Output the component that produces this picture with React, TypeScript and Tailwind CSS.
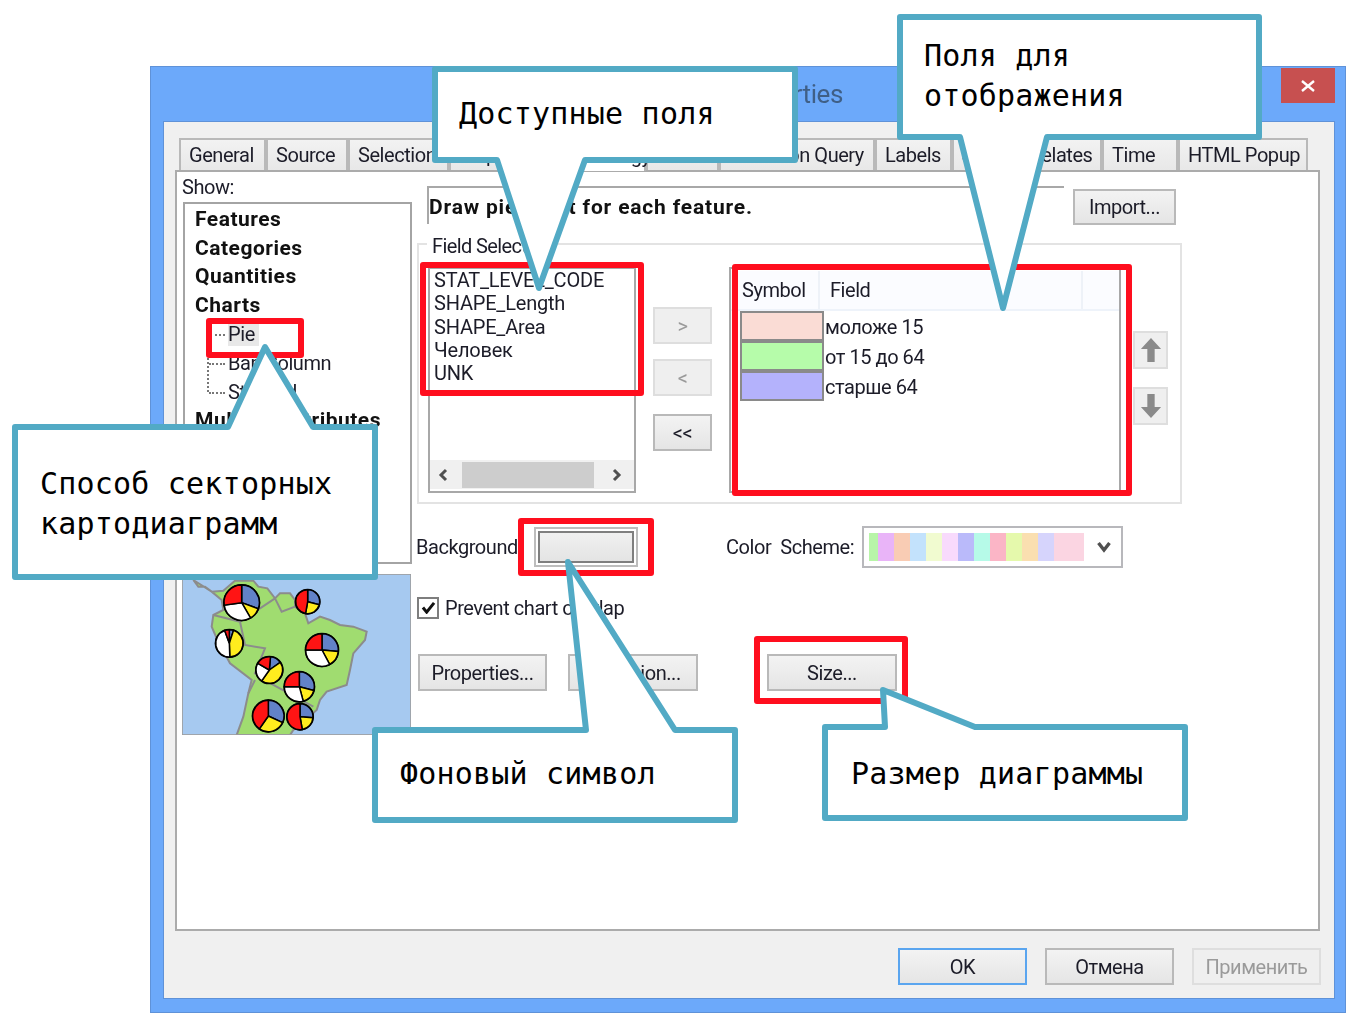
import React from "react";

const btn =
  "flex items-center justify-center border-2 border-[#b9b9b9] bg-gradient-to-b from-[#f3f3f3] to-[#e5e5e5] text-[#1c1c28]";
const btnOff =
  "flex items-center justify-center border-2 border-[#dedede] bg-[#efefef] text-[#9a9a9a]";

const tabs: [string, string][] = [
  ["General", "w-[87px]"],
  ["Source", "w-[82px]"],
  ["Selection", "w-[101px]"],
  ["Display", "w-[97px]"],
  ["Symbology", "w-[100px]"],
  ["Fields", "w-[73px]"],
  ["Definition Query", "w-[156px]"],
  ["Labels", "w-[77px]"],
  ["Joins & Relates", "w-[150px]"],
  ["Time", "w-[76px]"],
  ["HTML Popup", "w-[130px]"],
];

const swatches: [string, string][] = [
  ["w-[9px]", "bg-[#b8f5a8]"],
  ["w-[16px]", "bg-[#e9b4f8]"],
  ["w-[16px]", "bg-[#f9ccb4]"],
  ["w-[16px]", "bg-[#c3e2fc]"],
  ["w-[16px]", "bg-[#f1fbd0]"],
  ["w-[16px]", "bg-[#f8dafc]"],
  ["w-[16px]", "bg-[#babafa]"],
  ["w-[16px]", "bg-[#b6fae8]"],
  ["w-[16px]", "bg-[#fbb5c6]"],
  ["w-[16px]", "bg-[#e5f9ac]"],
  ["w-[16px]", "bg-[#fadfb0]"],
  ["w-[16px]", "bg-[#d6d4fc]"],
  ["w-[30px]", "bg-[#fbd5e2]"],
];

const R = "#ff1414";
const B = "#6282c8";
const Y = "#ffec1e";
const W = "#ffffff";

type Pie = { cx: number; cy: number; r: number; s: [string, number, number][] };
const pies: Pie[] = [
  { cx: 185, cy: 98, r: 53, s: [[B, 0, 110], [Y, 110, 150], [W, 150, 262], [R, 262, 360]] },
  { cx: 383, cy: 95, r: 36, s: [[B, 0, 105], [Y, 105, 190], [R, 190, 360]] },
  { cx: 148, cy: 220, r: 41, s: [[B, 0, 18], [Y, 18, 178], [W, 178, 340], [R, 340, 360]] },
  { cx: 426, cy: 240, r: 49, s: [[B, 0, 95], [Y, 95, 152], [W, 152, 270], [R, 270, 360]] },
  { cx: 268, cy: 300, r: 40, s: [[B, 5, 55], [Y, 55, 215], [W, 215, 300], [R, 300, 365]] },
  { cx: 358, cy: 350, r: 45, s: [[B, 0, 105], [Y, 105, 165], [W, 165, 270], [R, 270, 360]] },
  { cx: 265, cy: 438, r: 47, s: [[B, 0, 115], [Y, 115, 215], [R, 215, 360]] },
  { cx: 360, cy: 440, r: 39, s: [[B, 0, 95], [Y, 95, 170], [R, 170, 360]] },
];

function slice(cx: number, cy: number, r: number, a: number, b: number) {
  const p = (d: number) => {
    const t = ((d - 90) * Math.PI) / 180;
    return `${cx + r * Math.cos(t)} ${cy + r * Math.sin(t)}`;
  };
  return `M${cx} ${cy} L${p(a)} A${r} ${r} 0 ${b - a > 180 ? 1 : 0} 1 ${p(b)} Z`;
}

function MapPreview() {
  return (
    <svg viewBox="6 12 687 483" className="block w-[229px] h-[161px]">
      <rect x="6" y="12" width="687" height="483" fill="#a6c9f0" />
      <path
        d="M40 30 L55 50 L75 50 L95 65 L130 62 L150 45 L165 32 L220 32 L235 50 L262 55 L285 85 L300 70 L330 70 L345 90 L345 110 L375 130 L385 160 L420 140 L450 150 L480 165 L520 170 L560 185 L555 210 L520 250 L510 300 L500 345 L440 365 L420 390 L410 420 L370 455 L340 480 L330 495 L170 495 L190 440 L205 370 L215 330 L150 280 L110 205 L95 170 L100 135 L130 120 L125 90 L95 65 Z"
        fill="#a0dc70"
        stroke="#8c8c8c"
        strokeWidth="6"
      />
      <path
        d="M100 135 L180 155 L195 225 L255 235 L225 310 L280 345 L400 410 M285 85 L305 125 L345 110 M205 370 L225 330 M180 155 L240 115 L285 85"
        fill="none"
        stroke="#8c8c8c"
        strokeWidth="6"
      />
      {pies.map((p, i) => (
        <g key={i}>
          <circle cx={p.cx} cy={p.cy} r={p.r} fill="#000" stroke="#000" strokeWidth="6" />
          {p.s.map(([c, a, b], j) => (
            <path key={j} d={slice(p.cx, p.cy, p.r, a, b)} fill={c} stroke="#000" strokeWidth="4.5" />
          ))}
        </g>
      ))}
      <rect x="6" y="12" width="687" height="483" fill="none" stroke="#9e9e9e" strokeWidth="5" />
    </svg>
  );
}

function ArrowV({ up }: { up: boolean }) {
  return (
    <svg viewBox="0 0 24 26" className="w-[22px] h-[26px]">
      <path
        d={up ? "M12 0 L23 12 L16 12 L16 26 L8 26 L8 12 L1 12 Z" : "M12 26 L23 14 L16 14 L16 0 L8 0 L8 14 L1 14 Z"}
        fill="#8a8a8a"
      />
    </svg>
  );
}

function Dialog() {
  return (
    <div className="w-[1196px] h-[947px] bg-[#6ca9fa] border border-[#5f92d8] flex flex-col">
      <div className="h-[54px] flex items-start">
        <span className="w-[692px] h-[54px] text-right text-[26px] leading-[54px] tracking-[-0.4px] text-[#3f5f86]">
          Layer Properties
        </span>
        <div className="ml-auto mr-[10px] mt-[1px] w-[54px] h-[35px] bg-[#c75050] flex items-center justify-center">
          <svg viewBox="0 0 14 12" className="w-[14px] h-[12px]">
            <path d="M1 1 L13 11 M13 1 L1 11" stroke="#fff" strokeWidth="2.4" />
          </svg>
        </div>
      </div>

      <div className="ml-[12px] mr-[10px] h-[878px] bg-[#f0f0f0] border border-[#5f92d8] flex flex-col">
        <div className="pt-[16px] pl-[15px] flex h-[48px] gap-0">
          {tabs.map(([t, w]) => (
            <div
              key={t}
              className={
                t === "Symbology"
                  ? `${w} h-[33px] -mb-[1px] pl-[8px] bg-white border-2 border-b-0 border-[#b4b4b4] flex items-center whitespace-nowrap relative z-10`
                  : `${w} h-[32px] pl-[8px] bg-gradient-to-b from-[#f2f2f2] to-[#e8e8e8] border-2 border-b-0 border-[#b9b9b9] flex items-center whitespace-nowrap`
              }
            >
              {t}
            </div>
          ))}
        </div>

        <div className="ml-[11px] w-[1145px] h-[761px] bg-white border-2 border-[#ababab] flex pl-[5px]">
          {/* left column */}
          <div className="w-[230px] shrink-0 flex flex-col">
            <div className="h-[30px] leading-[31px]">Show:</div>
            <div className="h-[362px] ml-[1px] border-2 border-[#a4a4a4] pl-[10px] pt-[1px] font-bold text-[#111] text-[21px] tracking-[0.5px]">
              <div className="h-[29px] leading-[29px]">Features</div>
              <div className="h-[28px] leading-[28px]">Categories</div>
              <div className="h-[29px] leading-[29px]">Quantities</div>
              <div className="h-[29px] leading-[29px]">Charts</div>
              <div className="relative font-normal text-[#1c1c28] text-[20px] tracking-[-0.4px] pl-[33px]">
                <div className="absolute left-[12px] top-[14px] h-[58px] w-[12px] border-l-2 border-dotted border-[#777]" />
                <div className="h-[29px] leading-[29px] relative">
                  <span className="absolute -left-[13px] top-[14px] w-[10px] border-t-2 border-dotted border-[#777]" />
                  <span className="bg-[#e8e8e8] pr-[4px]">Pie</span>
                </div>
                <div className="h-[29px] leading-[29px] relative">
                  <span className="absolute -left-[19px] top-[14px] w-[16px] border-t-2 border-dotted border-[#777]" />
                  Bar/Column
                </div>
                <div className="h-[28px] leading-[28px] relative">
                  <span className="absolute -left-[19px] top-[14px] w-[16px] border-t-2 border-dotted border-[#777]" />
                  Stacked
                </div>
              </div>
              <div className="h-[29px] leading-[29px]">Multiple Attributes</div>
            </div>
            <div className="mt-[10px]">
              <MapPreview />
            </div>
          </div>

          {/* right column */}
          <div className="ml-[4px] flex flex-col">
            <div className="mt-[14px] flex items-start">
              <div className="ml-[11px] w-[637px] h-[38px] border-t-2 border-l-2 border-[#a8a8a8] pt-[4px] whitespace-nowrap font-bold text-[#111] text-[21px] tracking-[0.82px]">
                Draw pie chart for each feature.
              </div>
              <div className={`${btn} ml-[9px] mt-[3px] w-[103px] h-[36px]`}>Import...</div>
            </div>

            <div className="mt-[18px] ml-[1px] w-[765px] h-[261px] border-2 border-[#e3e3e3] relative flex pl-[9px] pt-[22px]">
              <span className="absolute left-[8px] -top-[12px] px-[5px] h-[26px] leading-[26px] bg-white tracking-[-0.6px]">
                Field Selection
              </span>
              <div className="w-[208px] h-[226px] border-2 border-[#a8a8a8] flex flex-col">
                <div className="flex-1 pl-[4px] leading-[23.3px] tracking-[-0.2px]">
                  <div>STAT_LEVEL_CODE</div>
                  <div>SHAPE_Length</div>
                  <div>SHAPE_Area</div>
                  <div>Человек</div>
                  <div>UNK</div>
                </div>
                <div className="h-[29px] mb-[2px] flex items-center px-[8px] bg-[#f0f0f0]">
                  <svg viewBox="0 0 10 14" className="w-[10px] h-[14px]">
                    <path d="M8 2 L3 7 L8 12" fill="none" stroke="#505050" strokeWidth="3" />
                  </svg>
                  <div className="ml-[14px] w-[132px] h-[26px] bg-[#cdcdcd]" />
                  <svg viewBox="0 0 10 14" className="ml-[18px] w-[10px] h-[14px]">
                    <path d="M2 2 L7 7 L2 12" fill="none" stroke="#505050" strokeWidth="3" />
                  </svg>
                </div>
              </div>

              <div className="ml-[17px] w-[59px] flex flex-col pt-[40px]">
                <div className={`${btnOff} h-[37px]`}>&gt;</div>
                <div className={`${btnOff} h-[37px] mt-[15px]`}>&lt;</div>
                <div className={`${btn} h-[37px] mt-[18px]`}>&lt;&lt;</div>
              </div>

              <div className="ml-[17px] w-[392px] h-[226px] border-2 border-[#a8a8a8] pl-[9px] bg-white flex flex-col">
                <div className="h-[40px] -ml-[9px] mt-[2px] flex bg-[#fbfcff] border-b-2 border-[#eef3fa] leading-[38px]">
                  <div className="w-[89px] pl-[11px] border-r-2 border-[#eef2f8]">Symbol</div>
                  <div className="w-[263px] pl-[10px] border-r-2 border-[#eef2f8]">Field</div>
                </div>
                {([
                  ["bg-[#fadcd5]", "моложе 15"],
                  ["bg-[#b6fcaa]", "от 15 до 64"],
                  ["bg-[#b4b2fc]", "старше 64"],
                ] as [string, string][]).map(([c, t]) => (
                  <div key={t} className="h-[30px] flex items-center first:mt-[1px]">
                    <div className={`${c} w-[84px] h-[30px] border-2 border-[#8a8a8a]`} />
                    <span className="ml-[1px] mt-[1px]">{t}</span>
                  </div>
                ))}
              </div>

              <div className="ml-[12px] w-[35px] flex flex-col pt-[64px]">
                <div className={`${btnOff} h-[38px]`}>
                  <ArrowV up />
                </div>
                <div className={`${btnOff} h-[38px] mt-[18px]`}>
                  <ArrowV up={false} />
                </div>
              </div>
            </div>

            <div className="mt-[22px] h-[42px] flex items-center">
              <span className="w-[118px] whitespace-nowrap">Background</span>
              <div className="w-[104px] h-[40px] border-2 border-[#bdbdbd] p-[2px]">
                <div className="w-full h-full border-2 border-[#7f7f7f] bg-gradient-to-b from-[#f0f0f0] to-[#e4e4e4]" />
              </div>
              <span className="ml-[88px] w-[136px] whitespace-nowrap">Color&nbsp; Scheme:</span>
              <div className="w-[261px] h-[42px] border-2 border-[#b8b8bc] flex items-center pl-[5px]">
                {swatches.map(([w, c], i) => (
                  <div key={i} className={`${w} ${c} h-[28px]`} />
                ))}
                <svg viewBox="0 0 14 12" className="ml-[13px] w-[14px] h-[12px]">
                  <path d="M1.5 2 L7 9 L12.5 2" fill="none" stroke="#505050" strokeWidth="3.4" />
                </svg>
              </div>
            </div>

            <div className="mt-[28px] h-[23px] flex items-center">
              <div className="ml-[1px] w-[22px] h-[22px] border-2 border-[#7e7e7e] flex items-center justify-center">
                <svg viewBox="0 0 16 14" className="w-[15px] h-[13px]">
                  <path d="M2 7 L6 12 L14 2" fill="none" stroke="#111" strokeWidth="3.2" />
                </svg>
              </div>
              <span className="ml-[6px] whitespace-nowrap">Prevent chart overlap</span>
            </div>

            <div className="mt-[35px] flex">
              <div className={`${btn} ml-[2px] w-[129px] h-[37px]`}>Properties...</div>
              <div className={`${btn} ml-[21px] w-[130px] h-[37px]`}>Exclusion...</div>
              <div className={`${btn} ml-[69px] w-[130px] h-[37px]`}>Size...</div>
            </div>
          </div>
        </div>

        <div className="mt-[17px] mr-[13px] flex justify-end gap-[18px]">
          <div className={`${btn} !border-[#5aa5ef] w-[129px] h-[37px]`}>OK</div>
          <div className={`${btn} w-[129px] h-[37px]`}>Отмена</div>
          <div className={`${btnOff} w-[129px] h-[37px]`}>Применить</div>
        </div>
      </div>
    </div>
  );
}

const red = "absolute border-[6px] border-[#ff0e1e] rounded-[3px]";
const note =
  "absolute h-[40px] leading-[40px] text-[30px] tracking-[0.2px] whitespace-nowrap text-black font-['DejaVu_Sans_Mono',monospace]";

export default function App() {
  return (
    <div className="relative w-[1366px] h-[1024px] bg-white overflow-hidden pt-[66px] pl-[150px] text-[20px] tracking-[-0.45px] text-[#1c1c28] font-['Roboto','Liberation_Sans',sans-serif]">
      <div className="blur-[0.4px]">
        <Dialog />
      </div>

      <div className={`${red} left-[206px] top-[318px] w-[98px] h-[40px]`} />
      <div className={`${red} left-[420px] top-[262px] w-[224px] h-[134px]`} />
      <div className={`${red} left-[732px] top-[264px] w-[400px] h-[232px]`} />
      <div className={`${red} left-[518px] top-[518px] w-[136px] h-[58px]`} />
      <div className={`${red} left-[754px] top-[636px] w-[154px] h-[68px]`} />

      <svg viewBox="0 0 1366 1024" className="absolute left-0 top-0 w-[1366px] h-[1024px]">
        <g fill="#fff" stroke="#52aac5" strokeWidth="6" strokeLinejoin="round">
          <path d="M435 69 H795 V160 H585 L539 288 L497 160 H435 Z" />
          <path d="M900 17 H1259 V137 H1047 L1003 308 L960 137 H900 Z" />
          <path d="M15 427 H228 L265 347 L313 427 H375 V577 H15 Z" />
          <path d="M375 730 H586 L568 562 L675 730 H735 V820 H375 Z" />
          <path d="M825 727 H885 L883 690 L975 727 H1185 V818 H825 Z" />
        </g>
      </svg>

      <span className={`${note} left-[459px] top-[94px]`}>Доступные поля</span>
      <span className={`${note} left-[924px] top-[36px]`}>Поля для</span>
      <span className={`${note} left-[924px] top-[76px]`}>отображения</span>
      <span className={`${note} left-[40px] top-[464px]`}>Способ секторных</span>
      <span className={`${note} left-[40px] top-[504px]`}>картодиаграмм</span>
      <span className={`${note} left-[400px] top-[754px]`}>Фоновый символ</span>
      <span className={`${note} left-[851px] top-[754px]`}>Размер диаграммы</span>
    </div>
  );
}
